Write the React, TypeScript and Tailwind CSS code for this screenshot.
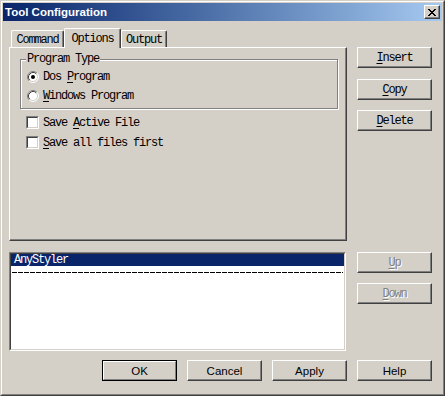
import React from "react";

const monoBase = "font-['Liberation_Mono',monospace] text-[12px] tracking-[-1.2px] leading-[12px]";
const mono = monoBase + " text-black";
const monoDis = monoBase + " text-[#808080] [text-shadow:1px_1px_0_#fff]";
const sans = "font-['Liberation_Sans',Arial,sans-serif] text-[11.5px] leading-[12px] text-black";

function U({ c }: { c: string }) {
  return <span className="underline underline-offset-[2px]">{c}</span>;
}

function Btn({ children, def, className = "" }: { children: React.ReactNode; def?: boolean; className?: string }) {
  if (def) {
    return (
      <div className={"w-[75px] h-[21px] border border-black " + className}>
        <div className="w-full h-full border border-t-white border-l-white border-r-[#808080] border-b-[#808080] flex items-center justify-center">
          {children}
        </div>
      </div>
    );
  }
  return (
    <div className={"w-[75px] h-[21px] border border-t-white border-l-white border-r-[#404040] border-b-[#404040] shadow-[inset_-1px_-1px_0_#808080] flex items-center justify-center " + className}>
      {children}
    </div>
  );
}

function Radio({ checked }: { checked?: boolean }) {
  return (
    <svg width="12" height="12" viewBox="0 0 12 12" className="shrink-0">
      <circle cx="6" cy="6" r="5" fill="#fff" />
      <path d="M9.89 2.11 A5.5 5.5 0 0 0 2.11 9.89" fill="none" stroke="#808080" strokeWidth="1" />
      <path d="M2.11 9.89 A5.5 5.5 0 0 0 9.89 2.11" fill="none" stroke="#ffffff" strokeWidth="1" />
      <path d="M9.18 2.82 A4.5 4.5 0 0 0 2.82 9.18" fill="none" stroke="#404040" strokeWidth="1" />
      <path d="M2.82 9.18 A4.5 4.5 0 0 0 9.18 2.82" fill="none" stroke="#d4d0c8" strokeWidth="1" />
      {checked && <circle cx="6" cy="6" r="2" fill="#000" />}
    </svg>
  );
}

function Check() {
  return (
    <div className="w-[13px] h-[13px] shrink-0 border border-t-[#808080] border-l-[#808080] border-r-white border-b-white">
      <div className="w-full h-full border border-t-[#404040] border-l-[#404040] border-r-[#d4d0c8] border-b-[#d4d0c8] bg-white" />
    </div>
  );
}

function CloseGlyph() {
  const px: [number, number][] = [
    [0, 0], [1, 0], [6, 0], [7, 0],
    [1, 1], [2, 1], [5, 1], [6, 1],
    [2, 2], [3, 2], [4, 2], [5, 2],
    [3, 3], [4, 3],
    [2, 4], [3, 4], [4, 4], [5, 4],
    [1, 5], [2, 5], [5, 5], [6, 5],
    [0, 6], [1, 6], [6, 6], [7, 6],
  ];
  return (
    <svg width="8" height="7" viewBox="0 0 8 7" shapeRendering="crispEdges">
      {px.map(([x, y], i) => (
        <rect key={i} x={x} y={y} width="1" height="1" fill="#000" />
      ))}
    </svg>
  );
}

export default function App() {
  return (
    <div className="w-[445px] h-[396px] overflow-hidden bg-[#d4d0c8] border border-t-[#d4d0c8] border-l-[#d4d0c8] border-r-[#404040] border-b-[#404040]">
      <div className="w-full h-full border border-t-white border-l-white border-r-[#808080] border-b-[#808080] p-[1px] flex flex-col">
        {/* Title bar */}
        <div className="h-[18px] shrink-0 bg-linear-to-r from-[#0a246a] to-[#a6caf0] flex items-center justify-between pl-[2px] pr-[2px]">
          <span className="font-['Liberation_Sans',Arial,sans-serif] font-bold text-[11.5px] leading-[14px] text-white">
            Tool Configuration
          </span>
          <div className="w-[16px] h-[14px] border border-t-white border-l-white border-r-[#404040] border-b-[#404040] shadow-[inset_-1px_-1px_0_#808080] bg-[#d4d0c8] flex items-center justify-center">
            <CloseGlyph />
          </div>
        </div>

        {/* Body */}
        <div className="pl-[6px] pt-[7px] grid grid-cols-[338px_75px] gap-x-[10px]">
          {/* Left: tabs + panel */}
          <div className="flex flex-col">
            <div className="h-[19px] flex items-end pl-[2px]">
              <div className={"w-[53px] h-[17px] border-l border-t border-l-white border-t-white border-r border-r-[#404040] shadow-[inset_-1px_0_0_#808080] rounded-tl-[2px] rounded-tr-[2px] flex items-center justify-center pt-[2px] " + mono}>
                Command
              </div>
              <div className={"relative z-10 -mb-px w-[57px] h-[20px] bg-[#d4d0c8] border-l border-t border-l-white border-t-white border-r border-r-[#404040] shadow-[inset_-1px_0_0_#808080] rounded-tl-[2px] rounded-tr-[2px] flex items-start justify-center pt-[4px] " + mono}>
                Options
              </div>
              <div className={"w-[46px] h-[17px] border-l border-t border-l-white border-t-white border-r border-r-[#404040] shadow-[inset_-1px_0_0_#808080] rounded-tl-[2px] rounded-tr-[2px] flex items-center justify-center pt-[2px] " + mono}>
                Output
              </div>
            </div>
            <div className="h-[194px] border border-t-white border-l-white border-r-[#404040] border-b-[#404040] shadow-[inset_-1px_-1px_0_#808080] pl-[10px] pt-[11px]">
              {/* Group box */}
              <div className="relative w-[318px] h-[50px] border border-[#808080] shadow-[inset_1px_1px_0_#fff,1px_1px_0_#fff]">
                <div className={"absolute -top-[7px] left-[5px] bg-[#d4d0c8] px-[1px] " + mono}>Program Type</div>
                <div className="pl-[6px] pt-[11px] flex flex-col gap-[7px]">
                  <div className="flex items-center gap-[4px] h-[12px]">
                    <Radio checked />
                    <span className={mono}>
                      Dos <U c="P" />rogram
                    </span>
                  </div>
                  <div className="flex items-center gap-[4px] h-[12px]">
                    <Radio />
                    <span className={mono}>
                      <U c="W" />indows Program
                    </span>
                  </div>
                </div>
              </div>
              <div className="pl-[6px] mt-[7px] flex flex-col gap-[7px]">
                <div className="flex items-center gap-[4px] h-[13px]">
                  <Check />
                  <span className={mono}>
                    Save <U c="A" />ctive File
                  </span>
                </div>
                <div className="flex items-center gap-[4px] h-[13px]">
                  <Check />
                  <span className={mono}>
                    <U c="S" />ave all files first
                  </span>
                </div>
              </div>
            </div>
          </div>

          {/* Right: action buttons */}
          <div className="flex flex-col pt-[19px]">
            <Btn>
              <span className={mono}><U c="I" />nsert</span>
            </Btn>
            <Btn className="mt-[11px]">
              <span className={mono}><U c="C" />opy</span>
            </Btn>
            <Btn className="mt-[10px]">
              <span className={mono}><U c="D" />elete</span>
            </Btn>
          </div>

          {/* List box */}
          <div className="mt-[11px]">
            <div className="w-[337px] h-[99px] border border-t-[#808080] border-l-[#808080] border-r-white border-b-white">
              <div className="w-full h-full border border-t-[#404040] border-l-[#404040] border-r-[#d4d0c8] border-b-[#d4d0c8] bg-white">
                <div className="h-[12px] bg-[#0a246a] pl-[3px] flex items-center">
                  <span className={monoBase + " text-white"}>AnyStyler</span>
                </div>
                <div className="h-[12px] flex items-center px-[1px]">
                  <div className="w-full h-[1px] bg-[repeating-linear-gradient(90deg,#000_0px,#000_5px,transparent_5px,transparent_6px)]" />
                </div>
              </div>
            </div>
          </div>

          {/* Up / Down */}
          <div className="mt-[11px] flex flex-col gap-[10px]">
            <Btn>
              <span className={monoDis}>
                <U c="U" />p
              </span>
            </Btn>
            <Btn>
              <span className={monoDis}>
                <U c="D" />own
              </span>
            </Btn>
          </div>

          {/* Bottom buttons */}
          <div className="col-span-2 mt-[9px] flex justify-end gap-[10px]">
            <Btn def>
              <span className={sans}>OK</span>
            </Btn>
            <Btn>
              <span className={sans}>Cancel</span>
            </Btn>
            <Btn>
              <span className={sans}>Apply</span>
            </Btn>
            <Btn>
              <span className={sans}>Help</span>
            </Btn>
          </div>
        </div>
      </div>
    </div>
  );
}
